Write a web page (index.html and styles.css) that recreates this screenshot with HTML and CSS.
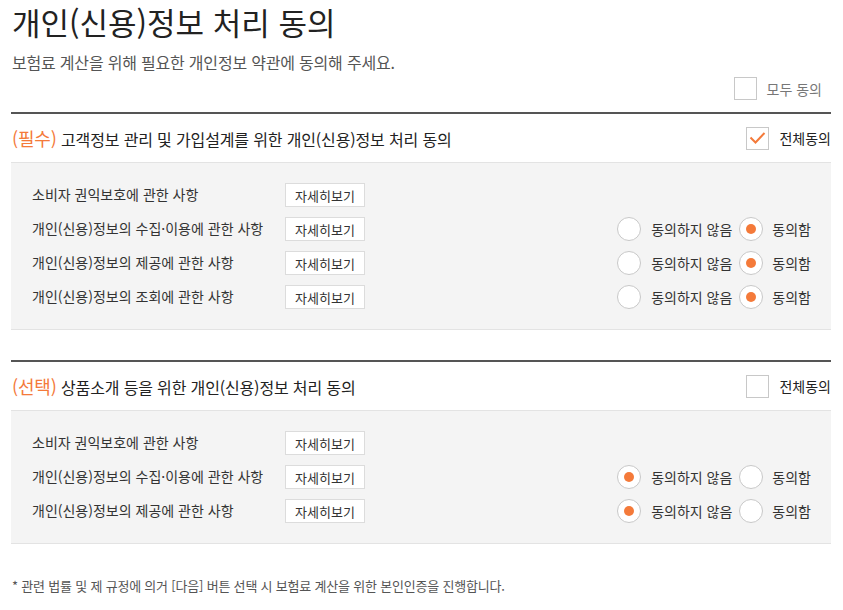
FILE: index.html
```html
<!DOCTYPE html>
<html lang="ko">
<head>
    <meta charset="UTF-8">
    <meta name="viewport" content="width=device-width, initial-scale=1.0">
    <title>개인(신용)정보 처리 동의</title>
    <link rel="stylesheet" href="styles.css">
</head>
<body>
    <div class="container">
        <h1>개인(신용)정보 처리 동의</h1>
        <p class="desc">보험료 계산을 위해 필요한 개인정보 약관에 동의해 주세요.</p>
        <div class="all-agree">
            <label class="check">
                <span class="box"></span>
                <span class="check-text">모두 동의</span>
            </label>
        </div>

        <section class="agree-section">
            <div class="section-head">
                <h2><em>(필수)</em> 고객정보 관리 및 가입설계를 위한 개인(신용)정보 처리 동의</h2>
                <label class="check">
                    <span class="box checked">
                        <svg viewBox="0 0 23 23" width="23" height="23"><path d="M4.5 10.5 L9.5 15.5 L18.5 6" fill="none" stroke="#f47a3a" stroke-width="2"/></svg>
                    </span>
                    <span class="check-text dark">전체동의</span>
                </label>
            </div>
            <ul class="terms">
                <li class="term">
                    <span class="term-name">소비자 권익보호에 관한 사항</span>
                    <button class="btn-detail">자세히보기</button>
                </li>
                <li class="term">
                    <span class="term-name">개인(신용)정보의 수집·이용에 관한 사항</span>
                    <button class="btn-detail">자세히보기</button>
                    <div class="radios">
                        <span class="radio"></span><span class="radio-text">동의하지 않음</span>
                        <span class="radio on"></span><span class="radio-text">동의함</span>
                    </div>
                </li>
                <li class="term">
                    <span class="term-name">개인(신용)정보의 제공에 관한 사항</span>
                    <button class="btn-detail">자세히보기</button>
                    <div class="radios">
                        <span class="radio"></span><span class="radio-text">동의하지 않음</span>
                        <span class="radio on"></span><span class="radio-text">동의함</span>
                    </div>
                </li>
                <li class="term">
                    <span class="term-name">개인(신용)정보의 조회에 관한 사항</span>
                    <button class="btn-detail">자세히보기</button>
                    <div class="radios">
                        <span class="radio"></span><span class="radio-text">동의하지 않음</span>
                        <span class="radio on"></span><span class="radio-text">동의함</span>
                    </div>
                </li>
            </ul>
        </section>

        <section class="agree-section">
            <div class="section-head">
                <h2><em>(선택)</em> 상품소개 등을 위한 개인(신용)정보 처리 동의</h2>
                <label class="check">
                    <span class="box"></span>
                    <span class="check-text dark">전체동의</span>
                </label>
            </div>
            <ul class="terms">
                <li class="term">
                    <span class="term-name">소비자 권익보호에 관한 사항</span>
                    <button class="btn-detail">자세히보기</button>
                </li>
                <li class="term">
                    <span class="term-name">개인(신용)정보의 수집·이용에 관한 사항</span>
                    <button class="btn-detail">자세히보기</button>
                    <div class="radios">
                        <span class="radio on"></span><span class="radio-text">동의하지 않음</span>
                        <span class="radio"></span><span class="radio-text">동의함</span>
                    </div>
                </li>
                <li class="term">
                    <span class="term-name">개인(신용)정보의 제공에 관한 사항</span>
                    <button class="btn-detail">자세히보기</button>
                    <div class="radios">
                        <span class="radio on"></span><span class="radio-text">동의하지 않음</span>
                        <span class="radio"></span><span class="radio-text">동의함</span>
                    </div>
                </li>
            </ul>
        </section>

        <p class="note">* 관련 법률 및 제 규정에 의거 [다음] 버튼 선택 시 보험료 계산을 위한 본인인증을 진행합니다.</p>
    </div>
</body>
</html>
```

FILE: styles.css
```css
:root {
    --point-color: #f47a3a;
    --text-color: #222;
    --sub-color: #555;
    --line-color: #555;
    --border-color: #c8c8c8;
    --panel-color: #f4f4f4;
}
body {
    font-family: "Noto Sans CJK KR", "Noto Sans", sans-serif;
    color: var(--text-color);
    background-color: white;
    margin: 0;
    padding: 0;
}
.container {
    width: 820px;
    padding: 0 11px;
}
h1 {
    margin: 2px 0 0 1px;
    font-size: 31px;
    font-weight: 400;
    line-height: 40px;
}
.desc {
    margin: 8px 0 0 1px;
    font-size: 16px;
    line-height: 24px;
    color: var(--sub-color);
    letter-spacing: -0.2px;
}
.all-agree {
    display: flex;
    justify-content: flex-end;
    margin-top: 3px;
    padding-right: 9px;
}
.check {
    display: flex;
    align-items: center;
    cursor: pointer;
}
.box {
    display: block;
    width: 21px;
    height: 21px;
    border: 1px solid var(--border-color);
    background-color: white;
}
.box svg {
    display: block;
    margin: -1px;
}
.check-text {
    margin-left: 10px;
    font-size: 14px;
    color: #777;
}
.check-text.dark {
    color: var(--text-color);
}
.agree-section {
    margin-top: 12px;
    border-top: 2px solid var(--line-color);
}
.agree-section + .agree-section {
    margin-top: 30px;
}
.section-head {
    display: flex;
    align-items: center;
    justify-content: space-between;
    height: 48px;
}
.section-head h2 {
    margin: 0 0 0 1px;
    font-size: 16px;
    font-weight: 400;
    letter-spacing: -0.15px;
}
.section-head h2 em {
    font-style: normal;
    font-size: 18px;
    color: var(--point-color);
}
.terms {
    list-style: none;
    margin: 0;
    padding: 20px 20px 20px 21px;
    background-color: var(--panel-color);
    border-top: 1px solid #e3e3e3;
    border-bottom: 1px solid #e3e3e3;
    display: flex;
    flex-direction: column;
    gap: 10px;
}
.term {
    display: flex;
    align-items: center;
    height: 24px;
}
.term-name {
    width: 253px;
    font-size: 14px;
    line-height: 20px;
    margin-top: -2px;
    color: #333;
}
.btn-detail {
    width: 80px;
    height: 24px;
    padding: 0;
    border: 1px solid #dcdcdc;
    background-color: white;
    font-family: inherit;
    font-size: 13px;
    color: #333;
    cursor: pointer;
}
.radios {
    display: flex;
    align-items: center;
    margin-left: auto;
}
.radio {
    position: relative;
    display: block;
    width: 22px;
    height: 22px;
    border: 1px solid var(--border-color);
    border-radius: 50%;
    background-color: white;
}
.radio.on::after {
    content: "";
    position: absolute;
    left: 6px;
    top: 6px;
    width: 10px;
    height: 10px;
    border-radius: 50%;
    background-color: var(--point-color);
}
.radio-text {
    margin: 0 7px 0 10px;
    font-size: 14px;
    color: #333;
}
.radio-text:last-child {
    margin-right: 0;
    margin-left: 9px;
}
.note {
    margin: 32px 0 0 1px;
    font-size: 13px;
    color: var(--sub-color);
    letter-spacing: -0.2px;
}
```
